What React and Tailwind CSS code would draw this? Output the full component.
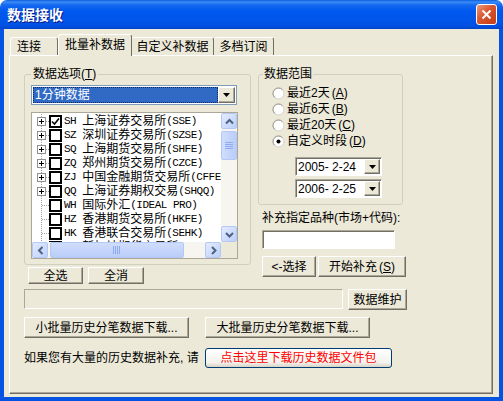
import React from 'react';

const UI = "font-['Liberation_Sans','Noto_Sans_CJK_SC',sans-serif]";
const MONO = "font-['Liberation_Mono','Noto_Sans_CJK_SC',monospace] text-[11px] tracking-[-0.5px]";
const RAISED = 'bg-[#ece9d8] border border-t-white border-l-white border-r-[#716f64] border-b-[#716f64] shadow-[inset_-1px_-1px_0_#aca899]';
const SUNKEN = 'bg-white border border-t-[#aca899] border-l-[#aca899] border-r-white border-b-white shadow-[inset_1px_1px_0_#716f64]';
const XPBTN = 'rounded-[2px] border border-[#b4c8f6] bg-[linear-gradient(135deg,#e3ebfe,#bdd0fb)] flex items-center justify-center shrink-0';

const markets = [
  { code: 'SH', name: '上海证券交易所', ex: 'SSE', plus: true, checked: true },
  { code: 'SZ', name: '深圳证券交易所', ex: 'SZSE', plus: true },
  { code: 'SQ', name: '上海期货交易所', ex: 'SHFE', plus: true },
  { code: 'ZQ', name: '郑州期货交易所', ex: 'CZCE', plus: true },
  { code: 'ZJ', name: '中国金融期货交易所', ex: 'CFFE', plus: true },
  { code: 'QQ', name: '上海证券期权交易', ex: 'SHQQ', plus: true },
  { code: 'WH', name: '国际外汇', ex: 'IDEAL PRO' },
  { code: 'HZ', name: '香港期货交易所', ex: 'HKFE' },
  { code: 'HK', name: '香港联合交易所', ex: 'SEHK' },
  { code: 'SG', name: '新加坡期货交易所', ex: 'SGX' },
];

const chevron = {
  up: 'M4 9.5 L7.5 6 L11 9.5',
  down: 'M4 6 L7.5 9.5 L11 6',
  left: 'M9.5 4 L6 7.5 L9.5 11',
  right: 'M6 4 L9.5 7.5 L6 11',
};

function ScrollBtn({ dir }) {
  return (
    <div className={`w-[16px] h-[16px] ${XPBTN}`}>
      <svg width="15" height="15" className="block">
        <path d={chevron[dir]} stroke="#4d6185" strokeWidth="2" fill="none" />
      </svg>
    </div>
  );
}

function DropArrow({ className }) {
  return (
    <div className={`${RAISED} flex items-center justify-center shrink-0 ${className}`}>
      <svg width="7" height="4" className="block">
        <path d="M0 0 H7 L3.5 4 Z" fill="#000" />
      </svg>
    </div>
  );
}

function TreeGlyph({ plus }) {
  const dot = { stroke: '#a0a0a0', strokeDasharray: '1 1' };
  return (
    <svg width="17" height="14" className="block shrink-0" shapeRendering="crispEdges">
      {plus ? (
        <>
          <line x1="9.5" y1="0" x2="9.5" y2="3" {...dot} />
          <line x1="9.5" y1="12" x2="9.5" y2="14" {...dot} />
          <line x1="14" y1="7.5" x2="17" y2="7.5" {...dot} />
          <rect x="5.5" y="3.5" width="8" height="8" fill="#fff" stroke="#919191" />
          <line x1="7" y1="7.5" x2="12" y2="7.5" stroke="#000" />
          <line x1="9.5" y1="5" x2="9.5" y2="10" stroke="#000" />
        </>
      ) : (
        <>
          <line x1="9.5" y1="0" x2="9.5" y2="14" {...dot} />
          <line x1="10" y1="7.5" x2="17" y2="7.5" {...dot} />
        </>
      )}
    </svg>
  );
}

function TreeRow({ m }) {
  return (
    <div className="h-[14px] flex items-center whitespace-nowrap">
      <TreeGlyph plus={m.plus} />
      <span className="w-[13px] h-[13px] border-2 border-black bg-white shrink-0 flex items-center justify-center">
        {m.checked && (
          <svg width="9" height="9" className="block">
            <path d="M1 4.5 L3.5 7 L8 1.5" stroke="#000" strokeWidth="1.6" fill="none" />
          </svg>
        )}
      </span>
      <span className={`ml-[2px] ${MONO}`}>{m.code}</span>
      <span className="ml-[6px] leading-[14px]">{m.name}</span>
      <span className={MONO}>({m.ex})</span>
    </div>
  );
}

function Radio({ checked, label, k }) {
  return (
    <div className="h-[16px] flex items-center gap-[2px]">
      <svg width="13" height="13" className="block shrink-0">
        <circle cx="6.5" cy="6.5" r="5.5" fill="#fff" stroke="#d4d0c8" />
        <path d="M2.6 10.4 A5.5 5.5 0 0 1 10.4 2.6" stroke="#9a978a" fill="none" />
        {checked && <circle cx="6.5" cy="6.5" r="2" fill="#000" />}
      </svg>
      <span className="leading-[14px]">
        {label}
        <span className="ml-[2px]">
          (<u>{k}</u>)
        </span>
      </span>
    </div>
  );
}

function DateBox({ value, className }) {
  return (
    <div className={`w-[87px] h-[19px] flex items-center ${SUNKEN} ${className}`}>
      <span className="flex-1 pl-[2px] text-[12px] leading-[14px] font-['Liberation_Sans',sans-serif]">{value}</span>
      <DropArrow className="w-[16px] h-[15px] mr-[1px]" />
    </div>
  );
}

function Button({ children, className }) {
  return (
    <div className={`${RAISED} flex items-center justify-center leading-[14px] ${className}`}>{children}</div>
  );
}

export default function App() {
  return (
    <div className={`w-[503px] h-[401px] flex flex-col bg-white text-[12px] leading-[14px] text-black ${UI}`}>
      {/* title bar */}
      <div className="h-[29px] shrink-0 flex items-center justify-between pl-[7px] pr-[6px] rounded-t-[7px] bg-[linear-gradient(to_bottom,#0b5ce0_0px,#3b8cf6_2px,#1569f0_5px,#0058ee_11px,#0055ea_20px,#0050e2_26px,#0043c8_29px)]">
        <span className="text-white font-bold text-[14px] leading-[16px] [text-shadow:1px_1px_0_#0a1883]">数据接收</span>
        <div className="w-[21px] h-[21px] rounded-[3px] border border-white bg-[linear-gradient(135deg,#ec9a7c,#d9552d_45%,#c23c14)] flex items-center justify-center">
          <svg width="11" height="11" className="block">
            <path d="M1.5 1.5 L9.5 9.5 M9.5 1.5 L1.5 9.5" stroke="#fff" strokeWidth="2" />
          </svg>
        </div>
      </div>

      {/* window body */}
      <div className="flex-1 flex flex-col bg-[#ece9d8] border-x-4 border-b-4 border-[#0553e3]">
        {/* tabs */}
        <div className="h-[26px] shrink-0 flex items-end pl-[6px] pt-[5px]">
          <div className="w-[48px] h-[18px] pl-[6px] flex items-center border-t border-l border-white border-r border-r-[#716f64] rounded-t-[3px]">连接</div>
          <div className="relative z-10 w-[74px] h-[22px] -mb-[1px] pb-[2px] flex items-center justify-center bg-[#ece9d8] border-t border-l border-white border-r border-r-[#716f64] rounded-t-[3px]">批量补数据</div>
          <div className="w-[82px] h-[18px] flex items-center justify-center border-t border-white border-r border-r-[#716f64] rounded-t-[3px]">自定义补数据</div>
          <div className="w-[60px] h-[18px] flex items-center justify-center border-t border-white border-r border-r-[#716f64] rounded-t-[3px]">多档订阅</div>
        </div>

        {/* tab page */}
        <div className="ml-[5px] w-[484px] h-[339px] border border-t-white border-l-white border-r-[#716f64] border-b-[#716f64] shadow-[inset_-1px_-1px_0_#aca899] pl-[14px] pt-[11px]">
          <div className="flex items-start">
            {/* left column */}
            <div className="w-[227px]">
              <fieldset className="w-[227px] h-[198px] border border-[#d0d0bf] rounded-[3px]">
                <legend className="ml-[6px] px-[2px] leading-[14px]">
                  数据选项(<u>T</u>)
                </legend>
                <div className="pl-[6px] pt-[4px]">
                  <div className="w-[206px] h-[20px] border border-[#7f9db9] bg-white flex items-center p-[1px]">
                    <div className="flex-1 h-full bg-[#316ac5] text-white border border-dotted border-[#0c2a66] flex items-center pl-[1px]">1分钟数据</div>
                    <DropArrow className="w-[17px] h-full" />
                  </div>
                  <div className="mt-[7px] w-[207px] h-[147px] border border-[#aca899] bg-white flex flex-col">
                    <div className="flex flex-1 min-h-0">
                      <div className="flex-1 overflow-hidden pt-[1px]">
                        {markets.map((m) => (
                          <TreeRow key={m.code} m={m} />
                        ))}
                      </div>
                      <div className="w-[16px] flex flex-col bg-[#f6f5f0]">
                        <ScrollBtn dir="up" />
                        <div className={`mt-[2px] h-[29px] ${XPBTN} bg-[linear-gradient(to_right,#d0ddfc,#bacdf9)]`}>
                          <svg width="8" height="8" className="block">
                            <path d="M0 0.5 H8 M0 2.5 H8 M0 4.5 H8 M0 6.5 H8" stroke="#8eaaf0" />
                          </svg>
                        </div>
                        <div className="flex-1" />
                        <ScrollBtn dir="down" />
                      </div>
                    </div>
                    <div className="flex h-[16px] shrink-0">
                      <div className="flex-1 flex bg-[#f6f5f0]">
                        <ScrollBtn dir="left" />
                        <div className={`ml-[2px] w-[134px] h-[16px] ${XPBTN} bg-[linear-gradient(to_bottom,#d0ddfc,#bacdf9)]`}>
                          <svg width="8" height="8" className="block">
                            <path d="M0.5 0 V8 M2.5 0 V8 M4.5 0 V8 M6.5 0 V8" stroke="#8eaaf0" />
                          </svg>
                        </div>
                        <div className="flex-1" />
                        <ScrollBtn dir="right" />
                      </div>
                      <div className="w-[16px] bg-[#ece9d8]" />
                    </div>
                  </div>
                </div>
              </fieldset>
              <div className="flex mt-[2px] pl-[4px] gap-[5px]">
                <Button className="w-[55px] h-[17px] leading-[13px]">全选</Button>
                <Button className="w-[56px] h-[17px] leading-[13px]">全消</Button>
              </div>
            </div>

            {/* right column */}
            <div className="ml-[7px] w-[150px]">
              <fieldset className="w-[145px] h-[138px] border border-[#d0d0bf] rounded-[3px]">
                <legend className="ml-[4px] px-[1px] leading-[14px]">数据范围</legend>
                <div className="pl-[13px] pt-[4px]">
                  <Radio label="最近2天" k="A" />
                  <Radio label="最近6天" k="B" />
                  <Radio label="最近20天" k="C" />
                  <Radio label="自定义时段" k="D" checked />
                  <DateBox value="2005- 2-24" className="ml-[23px] mt-[8px]" />
                  <DateBox value="2006- 2-25" className="ml-[23px] mt-[3px]" />
                </div>
              </fieldset>
              <div className="mt-[6px] ml-[4px] whitespace-nowrap">补充指定品种(市场+代码):</div>
              <div className={`mt-[5px] ml-[4px] w-[133px] h-[19px] ${SUNKEN}`} />
              <div className="mt-[7px] ml-[4px] flex gap-[2px]">
                <Button className="w-[54px] h-[21px]">{'<-选择'}</Button>
                <Button className="w-[88px] h-[21px]">
                  开始补充<span className="ml-[2px]">(<u>S</u>)</span>
                </Button>
              </div>
            </div>
          </div>

          <div className="mt-[5px] flex items-start">
            <div className="w-[319px] h-[20px] bg-[#ece9d8] border border-t-[#aca899] border-l-[#aca899] border-r-white border-b-white" />
            <Button className="ml-[5px] w-[59px] h-[21px]">数据维护</Button>
          </div>

          <div className="mt-[7px] flex gap-[16px]">
            <Button className="w-[165px] h-[21px]">小批量历史分笔数据下载...</Button>
            <Button className="w-[165px] h-[21px]">大批量历史分笔数据下载...</Button>
          </div>

          <div className="mt-[10px] flex items-center">
            <div className="w-[181px] whitespace-nowrap">如果您有大量的历史数据补充, 请</div>
            <div className="w-[187px] h-[20px] rounded-[3px] border border-[#003c74] bg-[linear-gradient(to_bottom,#ffffff,#f3f2ec_75%,#d8d3c6)] flex items-center justify-center text-[#ff0000]">
              点击这里下载历史数据文件包
            </div>
          </div>
        </div>
      </div>
    </div>
  );
}
